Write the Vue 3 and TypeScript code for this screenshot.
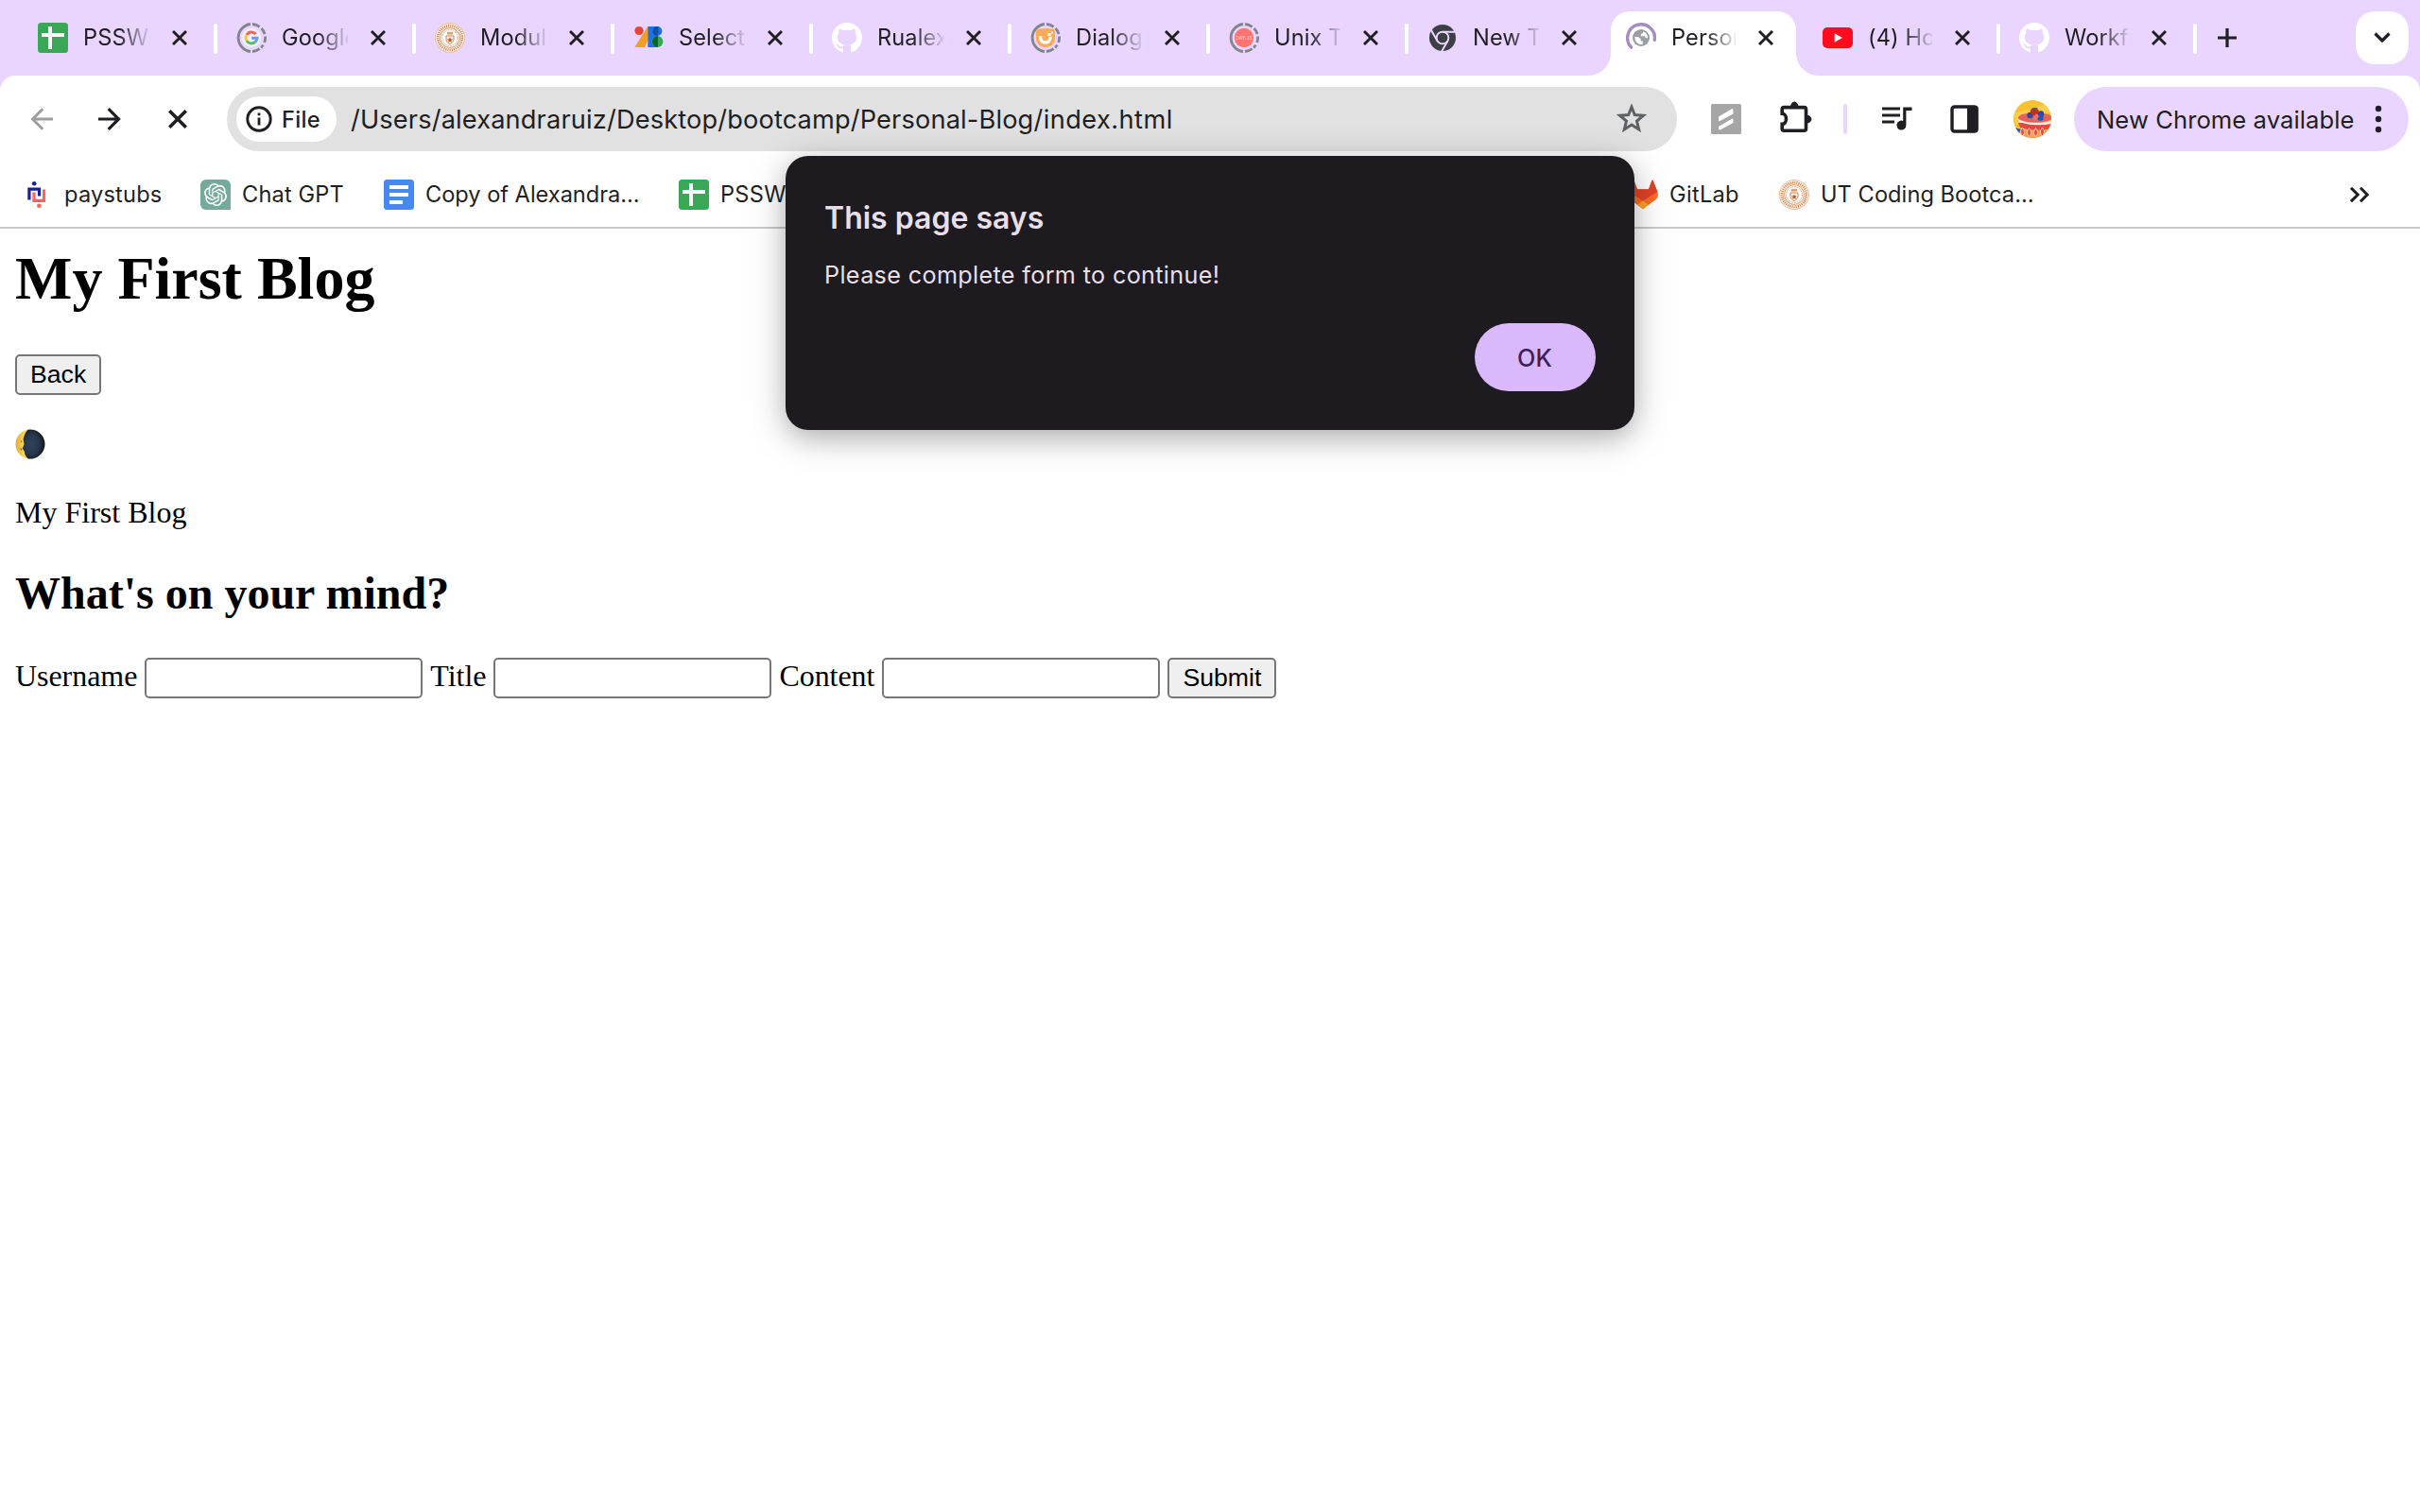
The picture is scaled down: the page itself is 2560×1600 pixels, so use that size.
<script setup lang="ts">
interface Tab {
  icon: string
  title: string
  active?: boolean
  narrow?: boolean
  divider?: boolean
}

interface Bookmark {
  icon: string
  label: string
  width: number
  spacing: number
}

const tabs: Tab[] = [
  { icon: 'sheets', title: 'PSSW', divider: true },
  { icon: 'google', title: 'Google', divider: true },
  { icon: 'seal', title: 'Modul', divider: true },
  { icon: 'devs', title: 'Select', divider: true },
  { icon: 'github', title: 'Rualex', divider: true },
  { icon: 'dialog', title: 'Dialog', divider: true },
  { icon: 'dayjs', title: 'Unix T', divider: true },
  { icon: 'chrome', title: 'New T' },
  { icon: 'loading', title: 'Person', active: true },
  { icon: 'youtube', title: '(4) Ho', narrow: true, divider: true },
  { icon: 'github', title: 'Workf', narrow: true, divider: true },
]

const bookmarks: Bookmark[] = [
  { icon: 'paystubs', label: 'paystubs', width: 104, spacing: 0.2 },
  { icon: 'chatgpt', label: 'Chat GPT', width: 110, spacing: 0.16 },
  { icon: 'docs', label: 'Copy of Alexandra...', width: 228, spacing: -0.02 },
  { icon: 'sheets', label: 'PSSW', width: 920, spacing: 0.3 },
  { icon: 'gitlab', label: 'GitLab', width: 76, spacing: 0.3 },
  { icon: 'seal', label: 'UT Coding Bootca...', width: 226, spacing: 0.06 },
]

const fields: string[] = ['Username', 'Title', 'Content']
</script>

<template>
  <div class="window">
    <svg class="sprite" aria-hidden="true">
      <symbol id="sheets" viewBox="0 0 32 32">
        <rect width="32" height="32" rx="3.5" fill="#3aa757" />
        <path d="M4 11h24v4H4zM11 4h4v24h-4z" fill="#fff" />
      </symbol>

      <symbol id="discard-ring" viewBox="0 0 32 32">
        <g fill="none" stroke="#80868b" stroke-width="2.8" stroke-linecap="butt">
          <path d="M15 1.5A14.6 14.6 0 0 0 15 30.5" />
          <path d="M17 1.5A14.6 14.6 0 0 1 24.6 4.3" />
          <path d="M26.6 6.1A14.6 14.6 0 0 1 30.1 12" />
          <path d="M30.5 14.5A14.6 14.6 0 0 1 29.7 21" />
          <path d="M28.4 23.6A14.6 14.6 0 0 1 26.2 26.4" />
          <path d="M17 30.5A14.6 14.6 0 0 0 24.6 27.7" />
        </g>
      </symbol>

      <symbol id="google" viewBox="0 0 32 32">
        <use href="#discard-ring" />
        <circle cx="16" cy="16" r="10" fill="#f6effe" />
        <g fill="none" stroke-width="3">
          <path d="M20.6 12.1A6 6 0 0 0 10.9 12.9" stroke="#ee675c" />
          <path d="M10.9 12.9A6 6 0 0 0 10.9 19.1" stroke="#fcc934" />
          <path d="M10.9 19.1A6 6 0 0 0 19.9 20.5" stroke="#5bb974" />
          <path d="M19.9 20.5A6 6 0 0 0 22 16.3H16.2" stroke="#669df6" />
        </g>
      </symbol>

      <symbol id="seal" viewBox="0 0 32 32">
        <circle cx="16" cy="16" r="16" fill="#ecc2a2" />
        <circle cx="16" cy="16" r="15" fill="#fbf1e9" />
        <circle cx="16" cy="16" r="12.800" fill="none" stroke="#cf8550" stroke-width="2.800" stroke-dasharray="1 1.150" />
        <circle cx="16" cy="16" r="10.400" fill="#fff" stroke="#d88f5e" stroke-width="0.900" />
        <circle cx="16" cy="16" r="8.400" fill="none" stroke="#e3ac86" stroke-width="1" stroke-dasharray="2 0.800" />
        <path d="M12 14h8v3.500c0 2.600-1.800 4.200-4 5-2.200-.8-4-2.400-4-5z" fill="#fff" stroke="#cf7a42" stroke-width="1" />
        <path d="M13 9.800h6v2.800h-6z" fill="#dd9e74" />
        <path d="M16 15.200l.9 2 2.100.2-1.600 1.400.5 2.100-1.900-1.100-1.900 1.100.5-2.100-1.600-1.400 2.100-.2z" fill="#c2571a" />
      </symbol>

      <symbol id="devs" viewBox="0 0 32 32">
        <path d="M1.300 26L15.300 4v14.500L12 26z" fill="#f29d24" />
        <path d="M15.300 4H26v22H15.300z" fill="#1a73e8" />
        <circle cx="6" cy="8.500" r="4.600" fill="#ea4335" />
        <circle cx="25.400" cy="9" r="5" fill="#1a73e8" />
        <path d="M25.400 4a5 5 0 0 0 0 10l1-2V4z" fill="#174ea6" />
        <circle cx="25.400" cy="20" r="6" fill="#34a853" />
        <path d="M26 14a6 6 0 0 0 0 12z" fill="#0d652d" />
      </symbol>

      <symbol id="github" viewBox="0 0 16 16">
        <path
          fill="#fff"
          d="M8 0C3.580 0 0 3.580 0 8c0 3.540 2.290 6.530 5.470 7.590.4.07.55-.17.55-.38 0-.19-.01-.82-.01-1.490-2.010.37-2.530-.49-2.690-.94-.09-.23-.48-.94-.82-1.130-.28-.15-.68-.52-.01-.53.63-.01 1.080.58 1.230.82.72 1.210 1.870.87 2.330.66.07-.52.28-.87.51-1.070-1.780-.2-3.640-.89-3.640-3.950 0-.87.31-1.590.82-2.150-.08-.2-.36-1.020.08-2.120 0 0 .67-.21 2.200.82.64-.18 1.320-.27 2-.27s1.360.09 2 .27c1.530-1.040 2.200-.82 2.200-.82.44 1.100.16 1.920.08 2.120.51.56.82 1.270.82 2.150 0 3.070-1.870 3.750-3.650 3.950.29.25.54.73.54 1.480 0 1.070-.01 1.930-.01 2.200 0 .21.15.46.55.38A8.010 8.010 0 0016 8c0-4.420-3.580-8-8-8z"
        />
      </symbol>

      <symbol id="dialog" viewBox="0 0 32 32">
        <use href="#discard-ring" />
        <rect x="6" y="6" width="20" height="20" rx="9" fill="#f9ab5a" />
        <path d="M6 14V10a3.500 3.500 0 0 1 3.500-3.500H23a3 3 0 0 1 3 3V16z" fill="#f9ab5a" />
        <path d="M10.600 14.300v1.500a5.200 5.200 0 0 0 10.400 0v-1" fill="none" stroke="#fff" stroke-width="3.400" />
        <path d="M18.500 11h3v3h-3zM22 9.500h2v2h-2z" fill="#fff" />
      </symbol>

      <symbol id="dayjs" viewBox="0 0 32 32">
        <use href="#discard-ring" />
        <circle cx="16" cy="16" r="10.200" fill="#ff7470" />
        <text x="16" y="18" text-anchor="middle" class="dayjs-text" fill="#ffc9c4">DAY.JS</text>
      </symbol>

      <symbol id="chrome" viewBox="0 0 32 32">
        <circle cx="16" cy="16" r="14" fill="#3c4043" />
        <g fill="none" stroke="#e9d5ff" stroke-width="2">
          <circle cx="16" cy="16" r="6.300" />
          <path d="M16 9.700H30M10.500 19.200L3.400 6.900M21.500 19.200L14.400 31.500" />
        </g>
        <circle cx="16" cy="16" r="5.200" fill="#3c4043" />
      </symbol>

      <symbol id="loading" viewBox="0 0 32 32">
        <path d="M5.600 26.100A14.400 14.400 0 1 1 30.300 18.300" fill="none" stroke="#a78bbf" stroke-width="3.400" stroke-linecap="round" />
        <circle cx="16" cy="16" r="9" fill="#9aa0a6" />
        <path d="M9.300 15l4.200.2 2.200 2.100v2.200h2v3.500c-4.600.7-8.400-2.700-8.400-8zM18 9.300v1.800l-2.200 1v2.100h4.200l1 2.100h2c.3-3.100-1.800-6.100-5-7z" fill="#fff" />
      </symbol>

      <symbol id="youtube" viewBox="0 0 32 32">
        <rect y="5" width="32" height="22" rx="5" fill="#ff0d1c" />
        <path d="M12.700 11.300v9.400l8.200-4.700z" fill="#fff" />
      </symbol>

      <symbol id="paystubs" viewBox="0 0 32 32">
        <path d="M6.900 21.500V10.100H17.500V17.500" fill="none" stroke="#14219a" stroke-width="3.200" />
        <path d="M12 13.500V22.400H22.500V10.500" fill="none" stroke="#ff6550" stroke-width="3.200" />
        <circle cx="12.200" cy="4.200" r="2.300" fill="#14219a" />
        <circle cx="17.300" cy="27.700" r="2.300" fill="#ff6550" />
      </symbol>

      <symbol id="chatgpt" viewBox="0 0 32 32">
        <path d="M6 0H26a6 6 0 0 1 6 6V32H6a6 6 0 0 1-6-6V6a6 6 0 0 1 6-6z" fill="#75a99c" />
        <svg x="4" y="4" width="24" height="24" viewBox="0 0 24 24">
          <path
            fill="#fff"
            d="M22.2819 9.8211a5.9847 5.9847 0 0 0-.5157-4.9108 6.0462 6.0462 0 0 0-6.5098-2.9A6.0651 6.0651 0 0 0 4.9807 4.1818a5.9847 5.9847 0 0 0-3.9977 2.9 6.0462 6.0462 0 0 0 .7427 7.0966 5.98 5.98 0 0 0 .511 4.9107 6.051 6.051 0 0 0 6.5146 2.9001A5.9847 5.9847 0 0 0 13.2599 24a6.0557 6.0557 0 0 0 5.7718-4.2058 5.9894 5.9894 0 0 0 3.9977-2.9001 6.0557 6.0557 0 0 0-.7475-7.0729zm-9.022 12.6081a4.4755 4.4755 0 0 1-2.8764-1.0408l.1419-.0804 4.7783-2.7582a.7948.7948 0 0 0 .3927-.6813v-6.7369l2.02 1.1686a.071.071 0 0 1 .038.052v5.5826a4.504 4.504 0 0 1-4.4945 4.4944zm-9.6607-4.1254a4.4708 4.4708 0 0 1-.5346-3.0137l.142.0852 4.783 2.7582a.7712.7712 0 0 0 .7806 0l5.8428-3.3685v2.3324a.0804.0804 0 0 1-.0332.0615L9.74 19.9502a4.4992 4.4992 0 0 1-6.1408-1.6464zM2.3408 7.8956a4.485 4.485 0 0 1 2.3655-1.9728V11.6a.7664.7664 0 0 0 .3879.6765l5.8144 3.3543-2.0201 1.1685a.0757.0757 0 0 1-.071 0l-4.8303-2.7865A4.504 4.504 0 0 1 2.3408 7.872zm16.5963 3.8558L13.1038 8.364 15.1192 7.2a.0757.0757 0 0 1 .071 0l4.8303 2.7913a4.4944 4.4944 0 0 1-.6765 8.1042v-5.6772a.79.79 0 0 0-.407-.667zm2.0107-3.0231l-.142-.0852-4.7735-2.7818a.7759.7759 0 0 0-.7854 0L9.409 9.2297V6.8974a.0662.0662 0 0 1 .0284-.0615l4.8303-2.7866a4.4992 4.4992 0 0 1 6.6802 4.66zM8.3065 12.863l-2.02-1.1638a.0804.0804 0 0 1-.038-.0567V6.0742a4.4992 4.4992 0 0 1 7.3757-3.4537l-.142.0805L8.704 5.459a.7948.7948 0 0 0-.3927.6813zm1.0976-2.3654l2.602-1.4998 2.6069 1.4998v2.9994l-2.5974 1.4997-2.6067-1.4997Z"
          />
        </svg>
      </symbol>

      <symbol id="docs" viewBox="0 0 32 32">
        <rect width="32" height="32" rx="3.500" fill="#4688f4" />
        <path d="M6 6h20v4H6zM6 14h20v4H6zM6 22h14v4H6z" fill="#fff" />
      </symbol>

      <symbol id="gitlab" viewBox="0 0 32 32">
        <path d="M16 31.300L1.600 20.400C-.2 18.500-.3 15.500.6 13L5.300.9c.2-.7 1-.7 1.300 0L10 10.200h12L25.400.9c.3-.7 1.100-.7 1.300 0L31.400 13c.9 2.500.8 5.500-1 7.400z" fill="#fc6d26" />
        <path d="M16 22.500L.6 13 5.300.9c.2-.7 1-.7 1.300 0L10 10.200h12L25.400.9c.3-.7 1.100-.7 1.300 0L31.400 13z" fill="#e24329" />
        <path d="M16 22.500L10 26.700 16 31.300l6-4.600z" fill="#fca326" />
      </symbol>

      <symbol id="close" viewBox="0 0 16 16">
        <path d="M1 1l14 14M15 1L1 15" fill="none" stroke="#1f1f23" stroke-width="2.900" />
      </symbol>
    </svg>

    <header class="tab-strip">
      <div v-for="(tab, i) in tabs" :key="i" class="tab" :class="{ active: tab.active, narrow: tab.narrow }">
        <svg class="favicon"><use :href="'#' + tab.icon" /></svg>
        <span class="tab-title">{{ tab.title }}</span>
        <svg class="tab-close"><use href="#close" /></svg>
        <i v-if="tab.divider" class="tab-divider"></i>
      </div>
      <svg class="new-tab" viewBox="0 0 20 20">
        <path d="M10 0v20M0 10h20" fill="none" stroke="#1f1f23" stroke-width="3.200" />
      </svg>
      <button class="tab-search">
        <svg width="18" height="12" viewBox="0 0 18 12">
          <path d="M1.500 1.500L9 9l7.500-7.500" fill="none" stroke="#1f1f23" stroke-width="3.200" />
        </svg>
      </button>
    </header>

    <div class="toolbar">
      <svg class="nav back" viewBox="0 0 24 24">
        <path d="M13.300 1.200L2.500 12l10.800 10.800M2 12h22" fill="none" stroke="#9e9e9e" stroke-width="3" />
      </svg>
      <svg class="nav forward" viewBox="0 0 24 24">
        <path d="M10.700 1.200L21.500 12 10.700 22.800M22 12H0" fill="none" stroke="#1f1f23" stroke-width="3.200" />
      </svg>
      <svg class="stop"><use href="#close" /></svg>

      <div class="omnibox">
        <div class="chip">
          <svg width="28" height="28" viewBox="0 0 28 28">
            <circle cx="14" cy="14" r="12.200" fill="none" stroke="#1f1f23" stroke-width="2.900" />
            <path d="M12.600 12.600h2.800v8h-2.800zM12.600 7.400h2.800v2.900h-2.800z" fill="#1f1f23" />
          </svg>
          <span>File</span>
        </div>
        <span class="url">/Users/alexandraruiz/Desktop/bootcamp/Personal-Blog<span class="file-name">/index.html</span></span>
        <svg class="star" viewBox="0 0 32 32">
          <path d="M16 3.200l3.300 8.300 9.200.7-7 5.900 2.200 8.800L16 22.100l-7.700 4.800 2.200-8.800-7-5.900 9.200-.7z" fill="none" stroke="#5f6063" stroke-width="3" />
        </svg>
      </div>

      <svg class="ext" viewBox="0 0 32 32">
        <rect width="32" height="32" rx="1.500" fill="#a6a6a6" />
        <path d="M8 13.500l14-8.300q1.500-.5 1.500 1v3.300q0 1-1 1.500L9.500 18q-1.500.5-1.500-1zM8 24l14-8.300q1.500-.5 1.500 1V19q0 1-1 1.500L10 27.300q-2 .5-2-1z" fill="#fff" />
      </svg>
      <svg class="puzzle" viewBox="0 0 40 40">
        <path d="M5.200 14.300V9.600a2 2 0 0 1 2-2H28.500a2 2 0 0 1 2 2V30.200a2 2 0 0 1-2 2H7.200a2 2 0 0 1-2-2V25.400a4.300 5.550 0 0 0 0-11.100z" fill="none" stroke="#1f1f23" stroke-width="3.600" />
        <path d="M14 7.200a4.200 5.600 0 0 1 8.400 0zM31 15.700a5.400 4.400 0 0 1 0 8.800z" fill="#1f1f23" />
      </svg>
      <i class="tool-divider"></i>
      <svg class="music" viewBox="0 0 32 26">
        <path d="M0 2h19M0 9h19M0 16h13" fill="none" stroke="#1f1f23" stroke-width="3.200" />
        <path d="M22.200 .4H31.500V4H25.400V19.500a5 5 0 1 1-3.200-4.600z" fill="#1f1f23" />
      </svg>
      <svg class="panel" viewBox="0 0 30 30">
        <rect x="2" y="2" width="26" height="26" rx="2.500" fill="none" stroke="#1f1f23" stroke-width="3.400" />
        <path d="M18 1h9.500a2 2 0 0 1 2 2v24a2 2 0 0 1-2 2H18z" fill="#1f1f23" />
      </svg>
      <svg class="avatar" viewBox="0 0 40 40">
        <clipPath id="avatar-clip"><circle cx="20" cy="20" r="20" /></clipPath>
        <g clip-path="url(#avatar-clip)">
          <rect width="40" height="40" fill="#f9c030" />
          <path d="M0 14L40 3v9L3 26z" fill="#fbcf4e" />
          <path d="M3 30h35v10H3z" fill="#f6a04b" />
          <path d="M2 29l6 2-3 5z" fill="#2b5cb0" />
          <path d="M5 24h35v6q-17 4-33-1z" fill="#e04a3f" />
          <path d="M5.500 20q17 6 34.500 2v3q-18 3.500-34.500-2z" fill="#fff0e6" />
          <ellipse cx="23" cy="18.500" rx="18" ry="5.200" fill="#e8605c" />
          <circle cx="17.500" cy="16" r="3.200" fill="#1f4fa8" />
          <circle cx="29" cy="14.500" r="3.200" fill="#1f4fa8" />
          <circle cx="28.500" cy="18.500" r="3.200" fill="#2357b5" />
          <path d="M17.500 12q1-4 5-4 4 1 4.500 4-1 4-4.500 4-4 0-5-4z" fill="#c62d22" />
          <path d="M21 20l3-6 3 3-4 5z" fill="#f0766c" />
          <path d="M19 9l7-1-3 3z" fill="#3d6b34" />
          <g fill="#e5483c" stroke="#ffd9c2" stroke-width="0.900">
            <path d="M9.500 29q4 5 0 9-4-4 0-9zM16.500 29.500q4 5 0 9-4-4 0-9zM23.500 29.500q4 5 0 9-4-4 0-9zM30.500 29q4 5 0 9-4-4 0-9z" />
          </g>
        </g>
      </svg>
      <button class="update">
        <span>New Chrome available</span>
        <svg width="8" height="30" viewBox="0 0 8 30">
          <g fill="#1f1f23"><circle cx="4" cy="4" r="3.200" /><circle cx="4" cy="15" r="3.200" /><circle cx="4" cy="26" r="3.200" /></g>
        </svg>
      </button>
    </div>

    <nav class="bookmarks">
      <div v-for="mark in bookmarks" :key="mark.label" class="bookmark">
        <svg class="favicon"><use :href="'#' + mark.icon" /></svg>
        <span :style="{ width: mark.width + 'px', letterSpacing: mark.spacing + 'px' }">{{ mark.label }}</span>
      </div>
      <svg class="overflow" viewBox="0 0 20 16">
        <path d="M1 .8L8.200 8 1 15.200M11 .8L18.200 8 11 15.200" fill="none" stroke="#1f1f23" stroke-width="3" />
      </svg>
    </nav>

    <main class="page">
      <h1>My First Blog</h1>
      <button class="native">Back</button>
      <svg class="moon" viewBox="0 0 32 32">
        <defs>
          <radialGradient id="moon-dark" cx="0.4" cy="0.5" r="0.6">
            <stop offset="0" stop-color="#31435c" />
            <stop offset="0.6" stop-color="#26354a" />
            <stop offset="1" stop-color="#0f151f" />
          </radialGradient>
          <linearGradient id="moon-lit" x1="0" x2="1">
            <stop offset="0" stop-color="#e3aa38" />
            <stop offset="0.25" stop-color="#f8d251" />
          </linearGradient>
        </defs>
        <circle cx="16" cy="16" r="15.500" fill="url(#moon-lit)" />
        <path d="M13.500 .7A15.500 15.500 0 1 1 13.500 31.300Q10 28 10 24L7.800 20.500 9.500 16 8.600 11Q10 4 13.500 .7z" fill="url(#moon-dark)" />
        <path d="M6 12l1.500 1-1 1.500zM5.500 20l2 1-1.500 2z" fill="#6b5a2c" />
      </svg>
      <p>My First Blog</p>
      <h2>What's on your mind?</h2>
      <form class="form" @submit.prevent>
        <template v-for="field in fields" :key="field">
          <label :for="field">{{ field }}</label>
          <input :id="field" type="text" />
        </template>
        <button class="native" type="submit">Submit</button>
      </form>
    </main>

    <section class="alert" role="alertdialog">
      <h3>This page says</h3>
      <p>Please complete form to continue!</p>
      <button>OK</button>
    </section>
  </div>
</template>

<style>
html,
body {
  margin: 0;
  background: #fff;
  overflow: hidden;
}
</style>

<style scoped>
* {
  box-sizing: border-box;
}

.window {
  position: relative;
  width: 2560px;
  height: 1600px;
  overflow: hidden;
  background: #fff;
  color: #1f1f23;
  font-family: Inter, "Noto Sans", sans-serif;
  font-size: 23.6px;
}

.sprite {
  position: absolute;
  width: 0;
  height: 0;
}

svg {
  display: block;
  flex: none;
}

button {
  border: 0;
  margin: 0;
  padding: 0;
  font: inherit;
  color: inherit;
}

.dayjs-text {
  font: 500 5px Inter, sans-serif;
}

/* Tab strip */
.tab-strip {
  display: flex;
  align-items: center;
  height: 96px;
  padding: 0 12px 16px 20px;
  background: #e9d5ff;
}

.tab {
  display: flex;
  align-items: center;
  flex: none;
  width: 210px;
  height: 80px;
  padding-left: 20px;
}

.tab.narrow {
  width: 208px;
}

.tab.active {
  position: relative;
  align-self: flex-end;
  width: 196px;
  height: 68px;
  margin: 0 8px 0 4px;
  padding: 0 0 12px 16px;
  background: #fff;
  border-radius: 20px 20px 0 0;
}

.tab.active::before,
.tab.active::after {
  content: "";
  position: absolute;
  bottom: 0;
  width: 24px;
  height: 24px;
}

.tab.active::before {
  left: -24px;
  background: radial-gradient(circle at 0 0, transparent 23.5px, #fff 24.5px);
}

.tab.active::after {
  right: -24px;
  background: radial-gradient(circle at 100% 0, transparent 23.5px, #fff 24.5px);
}

.favicon {
  width: 32px;
  height: 32px;
}

.tab-title {
  width: 70px;
  margin-left: 16px;
  white-space: nowrap;
  letter-spacing: 0.1px;
  line-height: 32px;
  -webkit-mask-image: linear-gradient(90deg, #000 54%, transparent 104%);
  mask-image: linear-gradient(90deg, #000 54%, transparent 104%);
}

.tab-close {
  width: 16px;
  height: 16px;
  margin-left: 24px;
}

.active .tab-title,
.narrow .tab-title {
  width: 68px;
}

.tab-divider {
  width: 4px;
  height: 32px;
  margin-left: auto;
  border-radius: 2px;
  background: #fff;
  transform: translateY(1px);
}

.new-tab {
  width: 20px;
  height: 20px;
  margin-left: 22px;
}

.tab-search {
  display: flex;
  align-items: center;
  justify-content: center;
  width: 56px;
  height: 56px;
  margin-left: auto;
  border-radius: 20px;
  background: #fff;
}

/* Toolbar */
.toolbar {
  position: relative;
  display: flex;
  align-items: center;
  height: 92px;
  margin-top: -16px;
  padding: 0 12px 0 32px;
  border-radius: 16px 16px 0 0;
  background: #fff;
}

.nav {
  width: 24px;
  height: 24px;
}

.forward {
  margin-left: 48px;
}

.stop {
  width: 20px;
  height: 20px;
  margin-left: 50px;
}

.omnibox {
  display: flex;
  align-items: center;
  flex: none;
  width: 1534px;
  height: 68px;
  margin-left: 42px;
  padding: 0 32px 0 10px;
  border-radius: 34px;
  background: #e1e1e1;
}

.chip {
  display: flex;
  align-items: center;
  gap: 10px;
  width: 106px;
  height: 48px;
  padding-left: 10px;
  border-radius: 24px;
  background: #fff;
  font-weight: 500;
  letter-spacing: 0.3px;
}

.url {
  margin-left: 15px;
  font-size: 27.2px;
  letter-spacing: 0.15px;
}

.file-name {
  letter-spacing: 0.45px;
}

.star {
  width: 32px;
  height: 32px;
  margin-left: auto;
}

.ext {
  width: 32px;
  height: 32px;
  margin-left: 36px;
}

.puzzle {
  width: 40px;
  height: 40px;
  margin-left: 38px;
}

.tool-divider {
  width: 4px;
  height: 32px;
  margin-left: 30px;
  border-radius: 2px;
  background: #e9d5ff;
}

.music {
  width: 32px;
  height: 26px;
  margin-left: 37px;
}

.panel {
  width: 30px;
  height: 30px;
  margin-left: 40px;
}

.avatar {
  width: 40px;
  height: 40px;
  margin-left: 37px;
}

.update {
  display: flex;
  align-items: center;
  width: 354px;
  height: 68px;
  margin-left: auto;
  padding: 0 28px 0 24px;
  justify-content: space-between;
  border-radius: 34px;
  background: #e9d5ff;
  font-size: 25.6px;
  letter-spacing: 0.07px;
}

/* Bookmarks bar */
.bookmarks {
  display: flex;
  align-items: center;
  gap: 40px;
  height: 70px;
  padding: 0 54px 0 24px;
  border-bottom: 2px solid #c9c9c9;
}

.bookmark {
  display: flex;
  align-items: center;
  gap: 12px;
}

.bookmark span {
  white-space: nowrap;
  line-height: 32px;
}

.overflow {
  width: 20px;
  height: 16px;
  margin-left: auto;
}

/* Page content */
.page {
  padding: 17px 16px;
  color: #000;
  font: 32px/36px "Liberation Serif", "Times New Roman", serif;
}

.page h1 {
  margin: 0 0 44px;
  font-size: 64px;
  line-height: 72px;
}

.native {
  display: block;
  height: 43px;
  padding: 0 14px;
  border: 2px solid #767676;
  border-radius: 5px;
  background: #efefef;
  color: #000;
  font: 26.67px "Liberation Sans", Arial, sans-serif;
}

.moon {
  width: 32px;
  height: 32px;
  margin: 36px 0 38px;
}

.page p {
  margin: 0;
}

.page h2 {
  margin: 41px 0;
  font-size: 48px;
  line-height: 54px;
}

.form {
  display: flex;
  gap: 8px;
}

.form label {
  padding-top: 1px;
  letter-spacing: -0.05px;
}

.form input {
  width: 294px;
  height: 43px;
  margin: 0;
  border: 2px solid #767676;
  border-radius: 5px;
  background: #fff;
}

/* Alert dialog */
.alert {
  position: absolute;
  top: 165px;
  left: 831px;
  display: flex;
  flex-direction: column;
  width: 898px;
  height: 290px;
  padding: 45px 41px 41px;
  border-radius: 24px;
  background: #1e1b20;
  color: #e8dfe8;
  box-shadow: 0 8px 40px rgba(0, 0, 0, 0.22), 0 8px 24px rgba(0, 0, 0, 0.14);
}

.alert h3 {
  margin: 0;
  font-size: 32px;
  font-weight: 560;
  line-height: 42px;
}

.alert p {
  margin: 22px 0 0;
  font-size: 25.2px;
  line-height: 34px;
  letter-spacing: 0.34px;
}

.alert button {
  align-self: flex-end;
  width: 128px;
  height: 72px;
  margin-top: auto;
  padding: 1px 1px 0 0;
  border-radius: 36px;
  background: #d9b9fb;
  color: #3b1f5e;
  font-size: 25.2px;
  font-weight: 500;
  letter-spacing: 0.3px;
}
</style>
